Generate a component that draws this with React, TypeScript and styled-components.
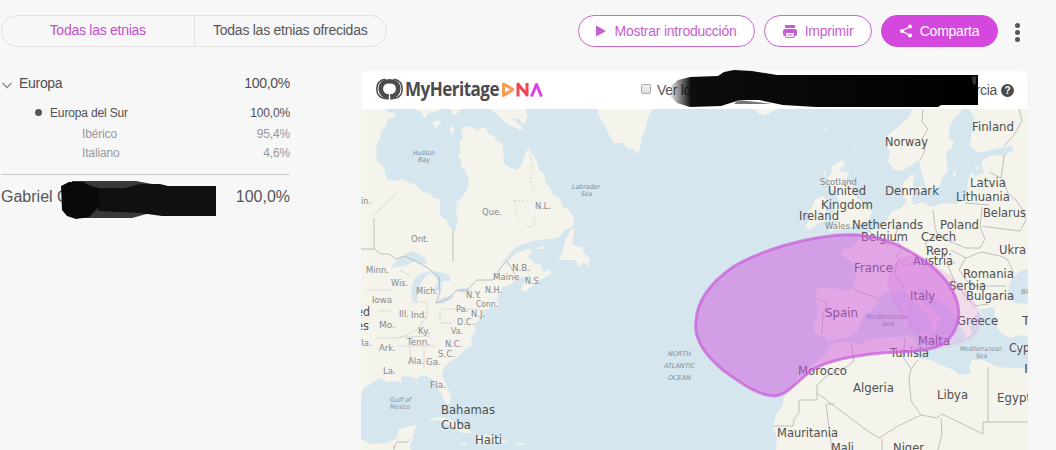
import styled, { createGlobalStyle } from "styled-components";

const GlobalStyle = createGlobalStyle`
  * { box-sizing: border-box; }
  body {
    margin: 0;
    background: #f7f7f7;
    color: #4c4c51;
    font-family: "Liberation Sans", Arial, sans-serif;
    overflow: hidden;
  }
`;

const Page = styled.div`
  width: 1056px;
  height: 450px;
  overflow: hidden;
`;

const Toolbar = styled.header`
  display: flex;
  justify-content: space-between;
  height: 71px;
  padding: 15px 31px 0 1px;
`;

const Tabs = styled.div`
  display: flex;
  width: 386px;
  height: 32px;
  border: 1px solid #e1e1e1;
  border-radius: 16px;
`;

const Tab = styled.button<{ $active?: boolean }>`
  flex: 1;
  padding: 0 0 2px;
  border: 0;
  background: none;
  color: ${({ $active }) => ($active ? "#c44fd0" : "#55555a")};
  font: 14px "Liberation Sans", Arial, sans-serif;
  letter-spacing: -0.26px;

  & + & {
    border-left: 1px solid #e1e1e1;
  }
`;

const Actions = styled.div`
  display: flex;
  gap: 9px;
`;

const ActionButton = styled.button<{ $width: number; $filled?: boolean }>`
  display: flex;
  align-items: center;
  justify-content: center;
  width: ${({ $width }) => $width}px;
  height: 32px;
  padding: 0;
  border: 1px solid ${({ $filled }) => ($filled ? "#d548dd" : "#c968d3")};
  border-radius: 16px;
  background: ${({ $filled }) => ($filled ? "#d548dd" : "#fff")};
  color: ${({ $filled }) => ($filled ? "#fff" : "#c75dd2")};
  font: 14px "Liberation Sans", Arial, sans-serif;
  letter-spacing: -0.24px;

  svg {
    margin-right: 8px;
  }
`;

const MenuButton = styled.button`
  display: flex;
  flex-direction: column;
  align-items: center;
  gap: 2px;
  width: 16px;
  padding: 8px 0 0;
  margin-left: 2px;
  border: 0;
  background: none;
`;

const MenuDot = styled.i`
  width: 5px;
  height: 5px;
  border-radius: 50%;
  background: #57575b;
`;

const Content = styled.main`
  display: grid;
  grid-template-columns: 361px 667px;
`;

const Results = styled.aside`
  width: 290px;
`;

const Row = styled.div<{ $height: number; $indent: number; $size: number; $color?: string }>`
  display: flex;
  align-items: center;
  justify-content: space-between;
  height: ${({ $height }) => $height}px;
  padding-left: ${({ $indent }) => $indent}px;
  color: ${({ $color }) => $color ?? "#4f4f54"};
  font-size: ${({ $size }) => $size}px;
  letter-spacing: ${({ $size }) => ($size > 12 ? -0.3 : -0.15)}px;
`;

const RowName = styled.span`
  display: flex;
  align-items: center;
`;

const Chevron = styled.svg`
  margin: 4px 7px 0 0;
`;

const Bullet = styled.i`
  width: 7px;
  height: 7px;
  margin-right: 8px;
  border-radius: 50%;
  background: #55555e;
`;

const Total = styled.div`
  position: relative;
  display: flex;
  justify-content: space-between;
  margin: 6px 0 0 1px;
  padding-top: 12px;
  border-top: 1px solid #c8c8c8;
  color: #55555a;
  font-size: 16px;
  line-height: 19px;
`;

const NameMask = styled.svg`
  position: absolute;
  left: 59px;
  top: 5px;
`;

const MapCard = styled.section`
  position: relative;
`;

const MapHeader = styled.div`
  display: flex;
  align-items: center;
  height: 38px;
  margin: 0 1px;
  padding: 0 13px 0 14px;
  border-radius: 5px 5px 0 0;
  background: #fff;
  font-size: 14px;
  letter-spacing: -0.3px;
`;

const Option = styled.label`
  display: flex;
  align-items: center;
  flex: 1;
  margin-left: 95px;
  color: #55555a;
`;

const Checkbox = styled.i`
  width: 10px;
  height: 10px;
  margin: -2px 6px 0 0;
  border: 1px solid #aaa;
  border-radius: 2px;
  background: linear-gradient(#f1f1f1, #ddd);
`;

const OptionEnd = styled.span`
  margin-left: auto;
`;

const Help = styled.b`
  width: 13px;
  height: 13px;
  margin-left: 4px;
  border-radius: 50%;
  background: #4b4b4b;
  color: #fff;
  font-size: 10px;
  line-height: 13px;
  text-align: center;
`;

const OptionMask = styled.svg`
  position: absolute;
  left: 304px;
  top: -2px;
`;

const MapSvg = styled.svg`
  display: block;
  font-family: "DejaVu Sans", sans-serif;
`;

type Label = [text: string, x: number, y: number, width: number];

const countries: Label[] = [
  ["Norway", 885, 146, 43],
  ["Finland", 972, 131, 42],
  ["United", 828, 195, 38],
  ["Kingdom", 821, 209, 52],
  ["Ireland", 799, 220, 40],
  ["Denmark", 885, 195, 54],
  ["Latvia", 970, 187, 36],
  ["Lithuania", 956, 201, 54],
  ["Belarus", 983, 217, 43],
  ["Netherlands", 852, 229, 71],
  ["Poland", 940, 229, 39],
  ["Belgium", 861, 241, 47],
  ["Czech", 921, 241, 35],
  ["Rep.", 926, 255, 26],
  ["Austria", 913, 265, 40],
  ["Ukra", 999, 254, 27],
  ["France", 854, 272, 39],
  ["Romania", 963, 278, 51],
  ["Serbia", 949, 290, 37],
  ["Bulgaria", 966, 300, 48],
  ["Italy", 910, 300, 25],
  ["Spain", 825, 317, 33],
  ["Greece", 957, 325, 41],
  ["T", 1022, 325, 8],
  ["Malta", 918, 345, 32],
  ["Tunisia", 890, 357, 39],
  ["Cyp", 1009, 352, 21],
  ["I", 1024, 373, 4],
  ["Morocco", 798, 375, 49],
  ["Algeria", 853, 392, 41],
  ["Libya", 937, 399, 31],
  ["Egypt", 997, 402, 34],
  ["Mauritania", 777, 437, 61],
  ["Mali", 831, 452, 23],
  ["Niger", 893, 452, 31],
  ["Bahamas", 441, 414, 54],
  ["Cuba", 441, 429, 30],
  ["Haiti", 475, 444, 27],
  ["ed", 356, 316, 14],
  ["es", 356, 330, 13],
];

const states: Label[] = [
  ["Que.", 482, 215, 20],
  ["Ont.", 411, 242, 18],
  ["N.L.", 535, 209, 16],
  ["in.", 361, 204, 10],
  ["Minn.", 366, 273, 23],
  ["Wis.", 391, 286, 17],
  ["Mich.", 416, 294, 22],
  ["Iowa", 372, 303, 20],
  ["Ill.", 399, 317, 10],
  ["Ind.", 411, 318, 16],
  ["Mo.", 379, 328, 16],
  ["Ky.", 418, 334, 12],
  ["Tenn.", 407, 345, 23],
  ["Ark.", 379, 351, 17],
  ["la.", 361, 346, 11],
  ["Ala.", 408, 364, 16],
  ["Ga.", 426, 365, 15],
  ["La.", 383, 374, 13],
  ["Fla.", 430, 388, 16],
  ["S.C.", 438, 357, 17],
  ["N.C.", 445, 347, 17],
  ["Va.", 451, 334, 12],
  ["D.C.", 457, 325, 17],
  ["N.J.", 471, 317, 14],
  ["Pa.", 456, 312, 12],
  ["Conn.", 476, 307, 22],
  ["N.Y.", 466, 298, 15],
  ["N.H.", 485, 293, 17],
  ["Maine", 493, 280, 26],
  ["N.B.", 512, 271, 18],
  ["N.S.", 525, 284, 16],
  ["Scotland", 820, 185, 37],
  ["Wales", 825, 229, 25],
];

const waters: Label[] = [
  ["Hudson", 413, 155, 22],
  ["Bay", 418, 162, 12],
  ["Labrador", 572, 189, 28],
  ["Sea", 581, 196, 11],
  ["Gulf of", 390, 402, 21],
  ["Mexico", 390, 409, 20],
  ["NORTH", 668, 356, 23],
  ["ATLANTIC", 664, 368, 31],
  ["OCEAN", 668, 380, 23],
  ["Mediterranean", 866, 319, 43],
  ["Sea", 882, 326, 12],
  ["Mediterranean", 960, 351, 42],
  ["Sea", 976, 358, 11],
  ["Bl", 1021, 294, 7],
];

const land = [
  // North America
  "M361 109H386L388 112 395 113 394 117 387 120 386 126 381 132 380 139 377 144 376 151 377 161 384 167 385 174 388 180 394 181 403 179 409 183 415 184 423 192 430 193 434 198 440 199 440 216 446 218 449 227 455 231 458 221 456 215 457 206 456 202 461 199 467 190 469 180 465 171 460 165 462 160 458 157 461 149 459 143 463 137 461 129 467 126 473 127 478 131 480 127 486 128 489 134 494 136 497 141 503 144 504 163 509 167 516 170 522 164 525 154 529 147 533 155 537 161 539 170 544 174 546 184 550 187 553 195 561 199 562 206 569 210 574 217 573 226 565 230 559 237 552 239 545 239 533 241 520 245 513 250 507 257 500 265 507 262 516 253 528 249 533 251 528 257 534 263 540 264 544 272 551 269 551 274 535 283 526 292 521 290 524 283 531 275 525 277 518 278 510 285 503 287 499 294 497 301 500 304 493 307 483 311 479 321 474 324 476 332 471 338 472 346 465 349 458 357 449 362 444 368 442 375 447 386 451 396 450 403 446 404 442 395 438 389 435 381 427 376 420 376 417 379 408 376 401 377 402 383 395 381 387 382 379 378 371 384 364 388 361 396Z",
  // Newfoundland and smaller islands
  "M558 260L562 254 565 241 570 231 575 227 573 237 572 244 577 247 582 246 584 253 590 259 588 267 583 262 579 267 575 260Z",
  "M413 109L420 111 425 118 429 113 438 111 441 109Z",
  "M432 123L438 120 441 122 436 128Z",
  "M450 128L454 126 454 133 451 134Z",
  "M450 109H460L457 114 453 115Z",
  "M490 109L501 118 508 125 516 128 523 131 521 126 512 118 519 119 524 125 528 117 525 109Z",
  "M536 248L544 246 544 249 538 249Z",
  "M597 109L600 119 606 128 609 135 614 143 623 143 626 147 632 149 637 153 640 150 642 137 646 128 648 118 653 109Z",
  "M748 109L756 110 758 114 765 115 772 112 777 109Z",
  // Caribbean and Yucatan
  "M427 422L436 417 447 418 460 425 473 433 462 433 448 424 438 420Z",
  "M474 437L483 435 499 437 508 443 494 442 482 444Z",
  "M460 443L467 443 465 446Z",
  "M517 443L524 443 523 445 517 445Z",
  "M361 439L371 444 386 443 397 438 399 429 416 425 413 436 410 446 411 450H361Z",
  // British Isles
  "M832 166L842 160 845 163 840 171 849 173 845 181 852 185 854 195 862 202 862 208 872 211 870 218 866 223 854 226 844 228 828 232 834 225 840 222 831 219 829 216 835 212 832 206 839 202 837 196 838 190 830 190 832 182 827 179 831 173Z",
  "M812 207L815 200 823 196 828 201 825 208 827 220 816 225 808 230 806 225 811 218 808 211Z",
  "M824 128L827 129 825 131Z M853 144L855 146 853 149Z M824 172L827 170 824 178Z",
  // Scandinavia
  "M913 109L908 118 898 127 887 136 886 144 890 152 888 161 894 170 902 171 915 163 919 160 921 171 924 180 926 189 934 190 940 186 942 178 948 171 947 162 946 152 951 149 954 142 949 138 949 128 954 119 963 109Z",
  "M952 174L957 170 955 178Z M917 187L924 186 922 193 917 192Z M975 167L980 165 977 171Z",
  // Eurasia
  "M968 109L975 117 972 130 970 146 979 153 990 150 1005 147 1011 145 1014 150 1004 156 993 155 982 160 982 168 985 173 976 176 971 172 967 184 968 193 963 199 957 204 944 203 931 207 922 202 914 205 911 199 915 192 913 184 915 174 909 177 903 183 902 193 907 201 901 208 892 211 887 220 878 228 869 231 857 241 854 247 842 250 841 255 852 262 856 273 854 287 849 291 831 288 818 288 815 296 818 310 813 328 815 334 823 336 828 342 836 339 846 338 857 332 860 324 864 316 877 305 878 298 886 292 895 294 904 290 912 299 921 309 929 317 932 326 930 333 936 330 938 320 943 322 938 314 928 307 919 296 918 288 924 288 930 295 941 303 952 310 957 321 962 330 967 338 972 334 970 326 976 324 974 317 981 309 995 307 994 314 998 321 997 328 1004 335 1011 338 1018 335 1028 337V109Z",
  "M981 347L993 348 988 350Z M1014 347L1023 343 1020 349Z M917 333L930 332 928 339Z M903 314L909 312 909 323 904 324Z M904 303L909 302 907 311Z",
  // Africa
  "M1028 370L1019 368 1007 368 995 366 985 361 973 359 969 367 971 373 960 375 952 369 940 365 931 360 920 359 913 354 917 347 916 339 909 335 899 337 886 337 873 339 859 344 850 342 838 342 829 345 826 354 817 361 807 368 799 374 793 386 784 397 783 405 776 415 773 427 777 437 776 450H1028Z",
];

const lakes = [
  "M391 268L398 260 405 255 411 251 419 254 424 257 427 264 419 264 414 261 405 266 397 267Z",
  "M412 300L411 288 415 278 422 273 433 271 426 276 421 283 418 296 417 303Z",
  "M430 271L440 272 449 275 451 281 443 281 441 288 439 292 434 289 438 281Z",
  "M435 303L441 298 455 295 452 299 442 304Z",
  "M456 292L462 288 472 289 466 293Z",
  "M1007 297L1009 286 1012 279 1020 271 1028 269V304L1016 303Z",
  "M441 218L446 216 447 219Z",
];

const borders = [
  "M374 218V249L381 254 389 254 396 259 405 256 415 261 428 268 439 277 440 292 436 303 448 299 457 290 467 290 477 280 493 280 501 267 507 261 515 274",
  "M453 230V262 M361 249H374",
  "M923 109L922 122 928 129 922 139 925 151 920 160",
  "M1019 109L1022 121 1014 135 1004 146 M1004 155L1003 165 1001 178 989 172 M1002 178L1008 193 1015 199 1023 210 1026 220 1020 231 1003 229 982 226",
  "M989 205L965 203 M933 210L935 227 938 236 925 243 929 253 M938 236L956 244 966 248 980 248 985 239 980 227 982 207",
  "M899 222L895 238 902 249 896 257 905 266 913 263 M951 250L966 258 981 252 1000 256 1007 259 1014 273 M966 257L959 270 967 281 972 286 1006 286 M955 262L948 266 955 282 964 294 974 306 988 304",
  "M890 245L880 240 869 231 M897 262L895 274 904 288 M854 289L878 299 M817 299L827 303 823 315 822 334",
  "M851 343L854 361 846 367 828 375 817 385V400H799V413L794 419 793 426H773",
  "M817 393L865 429 879 438 898 426 921 415 911 401 909 378 911 369 903 357 905 338 M911 369L918 360",
  "M882 438V450 M826 404L832 450 M827 404H834 M921 415L937 418 942 414 983 434 983 422H988V367 M988 422H1028 M941 418L942 434 938 450",
  "M394 448L397 442H407L410 439 M394 450V445",
];

const stateLines = [
  "M366 290H393 M378 311H391 M413 302H427V316 M427 316L418 329 407 335 397 338H376 M397 346H435 M424 348V370",
  "M399 337L431 336 M410 346V366 M441 309H480 M440 310V323L452 323 M374 215L397 193 M400 270L410 276",
];

const iberianZone =
  "M696 321C697 302 710 283 733 267C754 254 789 242 823 237C857 231 884 236 909 251C929 262 948 278 955 296C962 312 959 332 944 343C934 351 908 352 881 353C852 356 829 360 812 370C796 382 788 395 774 396C756 395 740 382 724 371C707 357 693 340 696 321Z";
const italianZone =
  "M890 290C884 267 902 249 925 260C946 272 974 292 979 315C984 337 961 345 939 347C914 337 902 319 890 290Z";

function Labels({ items, size, color, italic }: {
  items: Label[];
  size: number;
  color: string;
  italic?: boolean;
}) {
  return (
    <g fontSize={size} fill={color} fontStyle={italic ? "italic" : "normal"}>
      {items.map(([text, x, y, width]) => (
        <text key={`${text}${x}${y}`} x={x} y={y} textLength={width} lengthAdjust="spacingAndGlyphs">
          {text}
        </text>
      ))}
    </g>
  );
}

function EthnicityMap() {
  return (
    <MapSvg width="667" height="341" viewBox="361 109 667 341">
      <rect x="361" y="109" width="667" height="341" fill="#d5e6ee" />
      <g fill="#f4f3ec">
        {land.map((d) => <path d={d} key={d} />)}
      </g>
      <g fill="#d5e6ee">
        {lakes.map((d) => <path d={d} key={d} />)}
      </g>
      <g fill="none" stroke="#b3b1af" strokeWidth="0.8" strokeLinejoin="round">
        {borders.map((d) => <path d={d} key={d} />)}
      </g>
      <g fill="none" stroke="#d0cec9" strokeWidth="0.7">
        {stateLines.map((d) => <path d={d} key={d} />)}
      </g>
      <path
        d="M514 200L518 218 526 227 535 226 534 214M514 201H530M529 150L533 166 530 179 535 192"
        fill="none"
        stroke="#c9c7c2"
        strokeWidth="0.7"
        strokeDasharray="2 2"
      />
      <Labels items={countries} size={12} color="#505050" />
      <Labels items={states} size={8.5} color="#888" />
      <Labels items={waters} size={6.5} color="#7b8d9b" italic />
      <path d={italianZone} fill="#e65ae0" fillOpacity="0.14" stroke="#dc8cdc" strokeOpacity="0.12" strokeWidth="3" />
      <path d={iberianZone} fill="#cf58df" fillOpacity="0.5" stroke="#cb62d9" strokeOpacity="0.75" strokeWidth="3" />
    </MapSvg>
  );
}

function BrandLogo() {
  return (
    <svg width="170" height="30" viewBox="0 0 170 30" role="img">
      <g fill="none" stroke="#4b4b4d">
        <path d="M9.500 4.200C3 5 .8 9 .8 14S3 23 9.500 23.800" strokeWidth="1.500" />
        <path d="M17.500 4.200C24 5 26.200 9 26.200 14S24 23 17.500 23.800" strokeWidth="1.500" />
        <path d="M12 22C7 20.500 4.800 18 4.800 14C4.800 9 8 6.300 13.500 6.300S22.200 9 22.200 14C22.200 18 20 20.500 15 22" strokeWidth="4.600" />
      </g>
      <path d="M10 19H12.800V24.500H10Z M14.200 19H17V24.500H14.200Z" fill="#4b4b4d" />
      <text x="29" y="21" textLength="94" lengthAdjust="spacingAndGlyphs" fill="#4b4b4d" fontFamily="Open Sans, sans-serif" fontSize="20" fontWeight="700" letterSpacing="-0.6">
        MyHeritage
      </text>
      <g fill="none" strokeWidth="3" strokeLinejoin="round">
        <path d="M127.500 9V20.500L137 14.500Z" stroke="#f79a52" />
        <path d="M142 21.500V9L151 20V8" stroke="#ef4756" />
        <path d="M155.500 21.500L160.500 9.500 165.500 21.500" stroke="#e23ee8" />
      </g>
    </svg>
  );
}

export default function App() {
  return (
    <>
      <GlobalStyle />
      <Page>
        <Toolbar>
          <Tabs>
            <Tab $active>Todas las etnias</Tab>
            <Tab>Todas las etnias ofrecidas</Tab>
          </Tabs>
          <Actions>
            <ActionButton $width={177}>
              <svg width="10" height="12" viewBox="0 0 10 12">
                <path d="M0 .5L10 6 0 11.500Z" fill="currentColor" />
              </svg>
              Mostrar introducción
            </ActionButton>
            <ActionButton $width={108}>
              <svg width="14" height="13" viewBox="0 0 14 13">
                <path d="M2 3V1Q2 0 3 0H11Q12 0 12 1V3Z" fill="currentColor" />
                <path d="M2 4H12Q14 4 14 6V9Q14 11 12 11V8H2V11Q0 11 0 9V6Q0 4 2 4Z" fill="currentColor" />
                <path d="M2.500 7.500H11.500V11Q11.500 12.500 10 12.500H4Q2.500 12.500 2.500 11Z" fill="#fff" stroke="currentColor" />
                <path d="M4.500 10H9.500" stroke="currentColor" />
              </svg>
              Imprimir
            </ActionButton>
            <ActionButton $width={117} $filled>
              <svg width="12" height="14" viewBox="0 0 12 14">
                <path d="M10 2.500L2 7 10 11.500" fill="none" stroke="currentColor" strokeWidth="1.300" />
                <circle cx="10" cy="2.500" r="2" fill="currentColor" />
                <circle cx="2" cy="7" r="2" fill="currentColor" />
                <circle cx="10" cy="11.500" r="2" fill="currentColor" />
              </svg>
              Comparta
            </ActionButton>
            <MenuButton>
              <MenuDot />
              <MenuDot />
              <MenuDot />
            </MenuButton>
          </Actions>
        </Toolbar>

        <Content>
          <Results>
            <Row $height={24} $indent={2} $size={14}>
              <RowName>
                <Chevron width="10" height="7" viewBox="0 0 10 7">
                  <path d="M.5 1L5 5.500 9.500 1" fill="none" stroke="#909095" strokeWidth="1.500" />
                </Chevron>
                Europa
              </RowName>
              <span>100,0%</span>
            </Row>
            <Row $height={35} $indent={35} $size={12}>
              <RowName>
                <Bullet />
                Europa del Sur
              </RowName>
              <span>100,0%</span>
            </Row>
            <Row $height={8} $indent={82} $size={12} $color="#98989c">
              <span>Ibérico</span>
              <span>95,4%</span>
            </Row>
            <Row $height={30} $indent={82} $size={12} $color="#98989c">
              <span>Italiano</span>
              <span>4,6%</span>
            </Row>
            <Total>
              <span>Gabriel Q</span>
              <span>100,0%</span>
              <NameMask width="158" height="42" viewBox="60 180 158 42">
                <path d="M72 181H136L152 184 150 213 132 218H75Z" fill="#393939" />
                <path d="M96 188H125L140 184H160L168 186H216V216H162L140 213 98 211Z" fill="#101010" />
                <path d="M61 186L69 182H83L91 186 99 188 98 193 101 204 95 211 89 217 76 219 67 216 62 210Z" fill="#090909" />
              </NameMask>
            </Total>
          </Results>

          <MapCard>
            <MapHeader>
              <BrandLogo />
              <Option>
                <Checkbox />
                Ver lo
                <OptionEnd>rcia</OptionEnd>
                <Help>?</Help>
              </Option>
            </MapHeader>
            <OptionMask width="318" height="40" viewBox="665 69 318 40">
              <defs>
                <linearGradient id="brush">
                  <stop offset="0" stopColor="#000" stopOpacity="0" />
                  <stop offset="0.075" stopColor="#000" stopOpacity="0.95" />
                  <stop offset="1" stopColor="#000" />
                </linearGradient>
              </defs>
              <path
                d="M668 94L674 90 671 86 678 80 690 77 718 76 724 72 734 70 752 71 777 75H978V105H941L938 107H816L783 105 759 100 740 100 721 106 690 107 677 103Z"
                fill="url(#brush)"
              />
              <path d="M738 100L757 102 772 104H734Z" fill="#77777a" />
              <path d="M971 77L976 76V83L974 86Z" fill="#333" />
            </OptionMask>
            <EthnicityMap />
          </MapCard>
        </Content>
      </Page>
    </>
  );
}
